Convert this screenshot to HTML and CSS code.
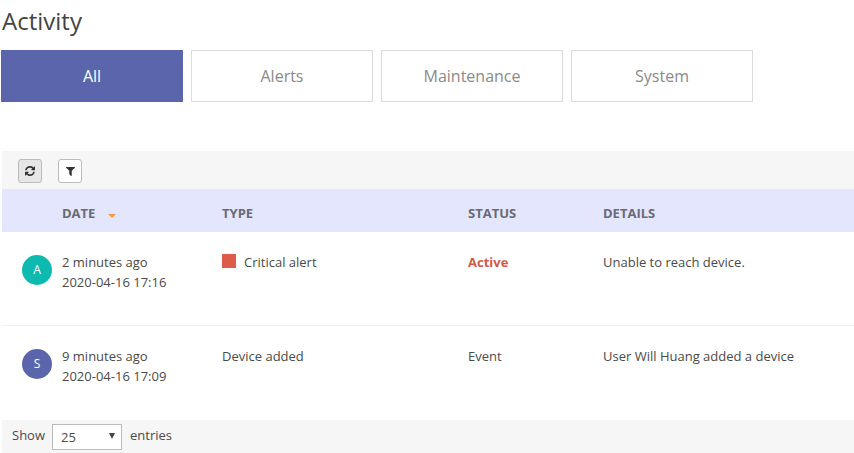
FILE: index.html
```
<!DOCTYPE html>
<html lang="en">
<head>
<meta charset="utf-8">
<title>Activity</title>
<link rel="stylesheet" href="styles.css">
</head>
<body>
<main class="page">
  <h1 class="title">Activity</h1>
  <nav class="tabs">
    <button type="button" class="tab active">All</button>
    <button type="button" class="tab">Alerts</button>
    <button type="button" class="tab">Maintenance</button>
    <button type="button" class="tab">System</button>
  </nav>
  <section class="panel">
    <div class="toolbar">
      <button type="button" class="tool pressed" aria-label="Refresh">
        <svg class="icon-refresh" viewBox="0 0 1536 1536"><path d="M1511 928q0 5-1 7-64 268-268 434.500t-478 166.500q-146 0-282.500-55t-243.500-157l-129 129q-19 19-45 19t-45-19-19-45v-448q0-26 19-45t45-19h448q26 0 45 19t19 45-19 45l-137 137q71 66 161 102t187 36q134 0 250-65t186-179q11-17 53-117 8-23 30-23h192q13 0 22.500 9.500t9.500 22.500zm25-800v448q0 26-19 45t-45 19h-448q-26 0-45-19t-19-45 19-45l138-138q-148-137-349-137-134 0-250 65t-186 179q-11 17-53 117-8 23-30 23h-199q-13 0-22.500-9.500t-9.500-22.500v-7q65-268 270-434.500t480-166.500q146 0 284 55.500t245 156.500l130-129q19-19 45-19t45 19 19 45z"/></svg>
      </button>
      <button type="button" class="tool" aria-label="Filter">
        <svg class="icon-filter" viewBox="0 0 1408 1408"><path d="M1403 39q17 41-14 70l-493 493v742q0 42-39 59-13 5-25 5-27 0-45-19l-256-256q-19-19-19-45v-486l-493-493q-31-29-14-70 17-39 59-39h1280q42 0 59 39z"/></svg>
      </button>
    </div>
    <table class="grid">
      <colgroup><col class="col-avatar"><col class="col-date"><col class="col-type"><col class="col-status"><col></colgroup>
      <thead>
        <tr><th></th><th>DATE<span class="sort"></span></th><th>TYPE</th><th>STATUS</th><th>DETAILS</th></tr>
      </thead>
      <tbody>
        <tr>
          <td class="who"><span class="avatar teal">A</span></td>
          <td>2 minutes ago<br>2020-04-16 17:16</td>
          <td><span class="severity"></span>Critical alert</td>
          <td class="alerting">Active</td>
          <td>Unable to reach device.</td>
        </tr>
        <tr>
          <td class="who"><span class="avatar">S</span></td>
          <td>9 minutes ago<br>2020-04-16 17:09</td>
          <td>Device added</td>
          <td>Event</td>
          <td>User Will Huang added a device</td>
        </tr>
      </tbody>
    </table>
    <div class="footer">
      <label for="size">Show</label>
      <span class="select"><select id="size"><option>25</option><option>50</option><option>100</option></select></span>
      <span>entries</span>
    </div>
  </section>
</main>
</body>
</html>
```
FILE: styles.css
```
* { box-sizing: border-box; }
body {
  margin: 0;
  background: #fff;
  color: #4a4a4a;
  font: 13px/20px "Open Sans", sans-serif;
}
button, select { font: inherit; color: inherit; }
.page { padding-left: 1px; }
.title {
  margin: 0 0 8px;
  padding: 0 1px;
  font-size: 24px;
  line-height: 42px;
  font-weight: 400;
  color: #444;
}
.tabs { display: flex; gap: 8px; }
.tab {
  flex: 0 1 182px;
  height: 52px;
  padding: 0;
  border: 1px solid #dcdcdc;
  background: #fff;
  color: #8a8a8a;
  font-size: 16px;
}
.tab.active { background: #5b65ab; border-color: #5b65ab; color: #fff; }
.panel { margin: 49px 0 0 1px; }
.toolbar {
  display: flex;
  gap: 16px;
  padding: 8px 16px 6px;
  background: #f6f6f6;
}
.tool {
  display: flex;
  align-items: center;
  justify-content: center;
  width: 24px;
  height: 24px;
  padding: 0;
  border: 1px solid #bbb;
  border-radius: 3px;
  background: #fff;
}
.tool.pressed { background: #e6e6e6; }
.tool svg { fill: #333; }
.icon-refresh { width: 10px; height: 10px; }
.icon-filter { width: 9px; height: 9px; }
.grid { width: 100%; table-layout: fixed; border-collapse: separate; border-spacing: 0; }
.col-avatar { width: 60px; }
.col-date { width: 160px; }
.col-type { width: 246px; }
.col-status { width: 135px; }
th {
  height: 43px;
  padding: 4px 0 0;
  background: #e3e6fd;
  color: #6a6a74;
  text-align: left;
  font-weight: 700;
}
.sort {
  display: inline-block;
  margin-left: 13px;
  border: 4px solid transparent;
  border-top-color: #f89838;
  border-bottom: 0;
}
td {
  height: 94px;
  padding: 20px 0 0;
  border-bottom: 1px solid #f0f0f0;
  vertical-align: top;
}
tbody tr:last-child td { border-bottom: 0; }
.who { padding: 23px 0 0 20px; }
.avatar {
  display: block;
  width: 30px;
  height: 30px;
  border-radius: 50%;
  background: #5b65ab;
  color: #fff;
  font-size: 12px;
  line-height: 30px;
  text-align: center;
}
.teal { background: #0cbab0; }
.severity {
  display: inline-block;
  width: 14px;
  height: 14px;
  margin-right: 8px;
  background: #de5b49;
  vertical-align: -1px;
}
.alerting { color: #d35847; font-weight: 700; }
.footer {
  display: flex;
  gap: 8px;
  padding: 4px 9px 4px 10px;
  line-height: 22px;
  background: #f6f6f6;
}
.footer label { margin-right: -1px; }
.select { position: relative; width: 70px; }
.select::after {
  content: "";
  position: absolute;
  top: 9px;
  right: 7px;
  border: 3px solid transparent;
  border-top: 6px solid #444;
  border-bottom: 0;
  pointer-events: none;
}
select {
  display: block;
  width: 100%;
  height: 26px;
  padding: 0 8px;
  border: 1px solid #bbb;
  border-radius: 0;
  background: #fff;
  appearance: none;
}
```
